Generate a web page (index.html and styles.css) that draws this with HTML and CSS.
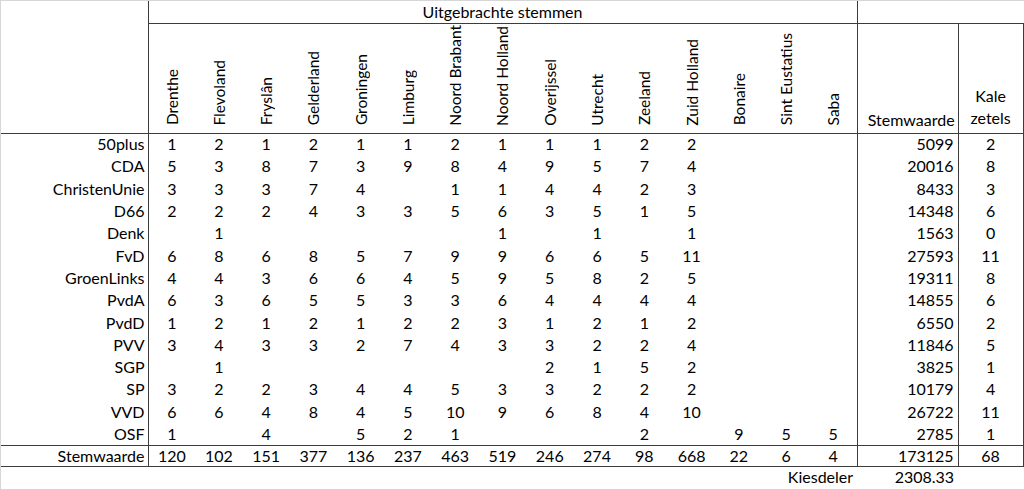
FILE: index.html
```html
<!DOCTYPE html>
<html lang="nl">
<head>
<meta charset="utf-8">
<title>Uitgebrachte stemmen</title>
<link rel="stylesheet" href="styles.css">
</head>
<body>
<div class="sheet">
<table class="grid">
<colgroup>
<col class="c-party">
<col class="c-prov"><col class="c-prov"><col class="c-prov"><col class="c-prov"><col class="c-prov">
<col class="c-prov"><col class="c-prov"><col class="c-prov"><col class="c-prov"><col class="c-prov">
<col class="c-prov"><col class="c-prov"><col class="c-prov"><col class="c-prov"><col class="c-prov">
<col class="c-sw">
<col class="c-kz">
</colgroup>
<thead>
<tr class="r-top">
<th class="corner" rowspan="2"></th>
<th class="group" colspan="15">Uitgebrachte stemmen</th>
<th class="top-right" colspan="2"></th>
</tr>
<tr class="r-head">
<th class="prov"><span>Drenthe</span></th>
<th class="prov"><span>Flevoland</span></th>
<th class="prov"><span>Fryslân</span></th>
<th class="prov"><span>Gelderland</span></th>
<th class="prov"><span>Groningen</span></th>
<th class="prov"><span>Limburg</span></th>
<th class="prov"><span>Noord Brabant</span></th>
<th class="prov"><span>Noord Holland</span></th>
<th class="prov"><span>Overijssel</span></th>
<th class="prov"><span>Utrecht</span></th>
<th class="prov"><span>Zeeland</span></th>
<th class="prov"><span>Zuid Holland</span></th>
<th class="prov"><span>Bonaire</span></th>
<th class="prov"><span>Sint Eustatius</span></th>
<th class="prov"><span>Saba</span></th>
<th class="sw-h">Stemwaarde</th>
<th class="kz-h">Kale<br>zetels</th>
</tr>
</thead>
<tbody>
<tr><td class="party">50plus</td><td>1</td><td>2</td><td>1</td><td>2</td><td>1</td><td>1</td><td>2</td><td>1</td><td>1</td><td>1</td><td>2</td><td>2</td><td></td><td></td><td></td><td class="sw">5099</td><td class="kz">2</td></tr>
<tr><td class="party">CDA</td><td>5</td><td>3</td><td>8</td><td>7</td><td>3</td><td>9</td><td>8</td><td>4</td><td>9</td><td>5</td><td>7</td><td>4</td><td></td><td></td><td></td><td class="sw">20016</td><td class="kz">8</td></tr>
<tr><td class="party">ChristenUnie</td><td>3</td><td>3</td><td>3</td><td>7</td><td>4</td><td></td><td>1</td><td>1</td><td>4</td><td>4</td><td>2</td><td>3</td><td></td><td></td><td></td><td class="sw">8433</td><td class="kz">3</td></tr>
<tr><td class="party">D66</td><td>2</td><td>2</td><td>2</td><td>4</td><td>3</td><td>3</td><td>5</td><td>6</td><td>3</td><td>5</td><td>1</td><td>5</td><td></td><td></td><td></td><td class="sw">14348</td><td class="kz">6</td></tr>
<tr><td class="party">Denk</td><td></td><td>1</td><td></td><td></td><td></td><td></td><td></td><td>1</td><td></td><td>1</td><td></td><td>1</td><td></td><td></td><td></td><td class="sw">1563</td><td class="kz">0</td></tr>
<tr><td class="party">FvD</td><td>6</td><td>8</td><td>6</td><td>8</td><td>5</td><td>7</td><td>9</td><td>9</td><td>6</td><td>6</td><td>5</td><td>11</td><td></td><td></td><td></td><td class="sw">27593</td><td class="kz">11</td></tr>
<tr><td class="party">GroenLinks</td><td>4</td><td>4</td><td>3</td><td>6</td><td>6</td><td>4</td><td>5</td><td>9</td><td>5</td><td>8</td><td>2</td><td>5</td><td></td><td></td><td></td><td class="sw">19311</td><td class="kz">8</td></tr>
<tr><td class="party">PvdA</td><td>6</td><td>3</td><td>6</td><td>5</td><td>5</td><td>3</td><td>3</td><td>6</td><td>4</td><td>4</td><td>4</td><td>4</td><td></td><td></td><td></td><td class="sw">14855</td><td class="kz">6</td></tr>
<tr><td class="party">PvdD</td><td>1</td><td>2</td><td>1</td><td>2</td><td>1</td><td>2</td><td>2</td><td>3</td><td>1</td><td>2</td><td>1</td><td>2</td><td></td><td></td><td></td><td class="sw">6550</td><td class="kz">2</td></tr>
<tr><td class="party">PVV</td><td>3</td><td>4</td><td>3</td><td>3</td><td>2</td><td>7</td><td>4</td><td>3</td><td>3</td><td>2</td><td>2</td><td>4</td><td></td><td></td><td></td><td class="sw">11846</td><td class="kz">5</td></tr>
<tr><td class="party">SGP</td><td></td><td>1</td><td></td><td></td><td></td><td></td><td></td><td></td><td>2</td><td>1</td><td>5</td><td>2</td><td></td><td></td><td></td><td class="sw">3825</td><td class="kz">1</td></tr>
<tr><td class="party">SP</td><td>3</td><td>2</td><td>2</td><td>3</td><td>4</td><td>4</td><td>5</td><td>3</td><td>3</td><td>2</td><td>2</td><td>2</td><td></td><td></td><td></td><td class="sw">10179</td><td class="kz">4</td></tr>
<tr><td class="party">VVD</td><td>6</td><td>6</td><td>4</td><td>8</td><td>4</td><td>5</td><td>10</td><td>9</td><td>6</td><td>8</td><td>4</td><td>10</td><td></td><td></td><td></td><td class="sw">26722</td><td class="kz">11</td></tr>
<tr><td class="party">OSF</td><td>1</td><td></td><td>4</td><td></td><td>5</td><td>2</td><td>1</td><td></td><td></td><td></td><td>2</td><td></td><td>9</td><td>5</td><td>5</td><td class="sw">2785</td><td class="kz">1</td></tr>
<tr class="total"><td class="party">Stemwaarde</td><td>120</td><td>102</td><td>151</td><td>377</td><td>136</td><td>237</td><td>463</td><td>519</td><td>246</td><td>274</td><td>98</td><td>668</td><td>22</td><td>6</td><td>4</td><td class="sw">173125</td><td class="kz">68</td></tr>
<tr class="extra"><td></td><td class="kd-label" colspan="15">Kiesdeler</td><td class="sw-plain">2308.33</td><td></td></tr>
</tbody>
</table>
</div>
</body>
</html>
```

FILE: styles.css
```css
html, body {
  margin: 0;
  padding: 0;
  background: #ffffff;
}

.sheet {
  width: 1023px;
  height: 488px;
  border-top: 1px solid #d6d6d6;
  border-left: 1px solid #d6d6d6;
  overflow: hidden;
  font-family: "Lato", "Liberation Sans", sans-serif;
  font-size: 16px;
  color: #000000;
}

.grid {
  border-collapse: collapse;
  table-layout: fixed;
  width: 1022px;
}

.c-party { width: 147px; }
.c-prov { width: 47.27px; }
.c-sw { width: 101px; }
.c-kz { width: 65px; }

.grid th,
.grid td {
  padding: 0;
  font-weight: normal;
  text-align: center;
  line-height: 18px;
  white-space: nowrap;
}

.r-top { height: 22px; }
.r-top th { vertical-align: middle; }

.corner {
  border-right: 1px solid #3c3c3c;
  border-bottom: 1px solid #3c3c3c;
}

.group {
  border-right: 1px solid #3c3c3c;
  border-bottom: 1px solid #3c3c3c;
}

.top-right {
  border-bottom: 1px solid #3c3c3c;
}

.r-head { height: 110px; }

.r-head th {
  vertical-align: bottom;
  border-bottom: 1px solid #3c3c3c;
  padding-bottom: 4px;
}

.prov span {
  display: inline-block;
  writing-mode: vertical-rl;
  transform: rotate(180deg);
  font-size: 15.5px;
  line-height: 18px;
}

.sw-h {
  text-align: right !important;
  padding-right: 3px !important;
  border-left: 1px solid #3c3c3c;
  border-right: 1px solid #3c3c3c;
}

.kz-h {
  border-right: 1px solid #3c3c3c;
  line-height: 22px !important;
}

.grid tbody tr { height: 22.3px; }

.party {
  text-align: right !important;
  padding-right: 3px !important;
  border-right: 1px solid #3c3c3c;
}

.sw {
  text-align: right !important;
  padding-right: 4px !important;
  border-left: 1px solid #3c3c3c;
  border-right: 1px solid #3c3c3c;
}

.kz {
  border-right: 1px solid #3c3c3c;
}

.grid tbody tr.total { height: 21px; }

.total td {
  border-top: 1px solid #3c3c3c;
  border-bottom: 1px solid #3c3c3c;
}

.grid tbody tr.extra { height: 21px; }

.kd-label {
  text-align: right !important;
  padding-right: 4px !important;
}

.sw-plain {
  text-align: right !important;
  padding-right: 4px !important;
}
```
